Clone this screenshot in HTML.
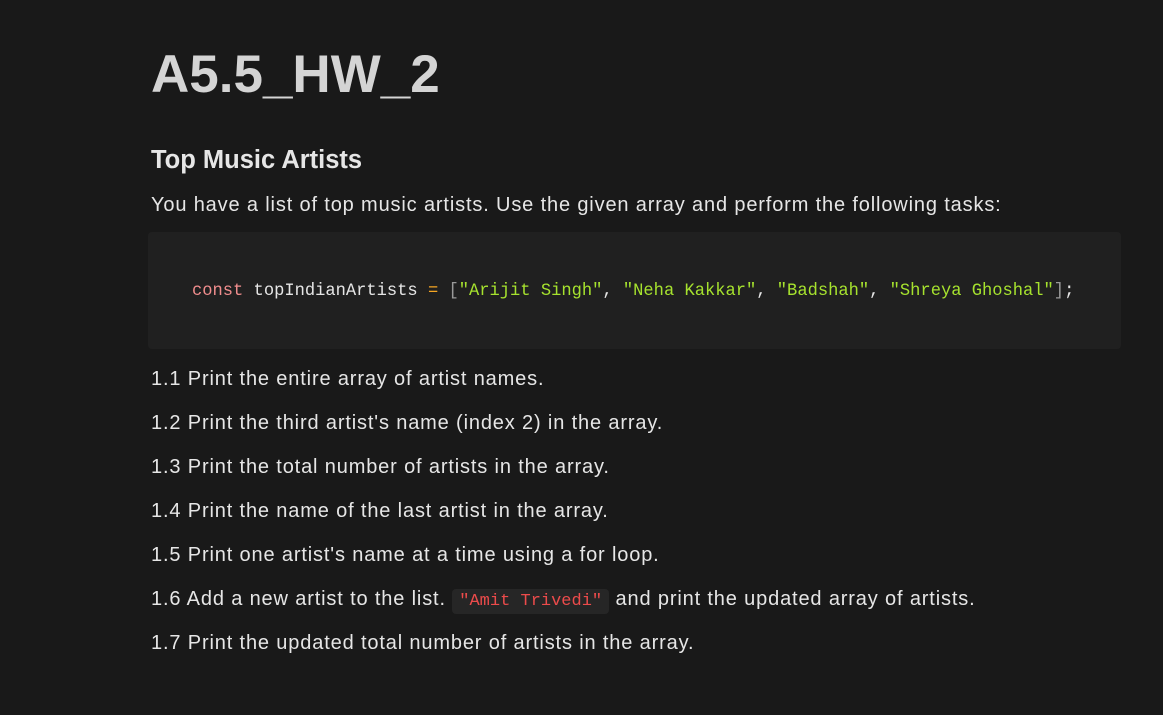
<!DOCTYPE html>
<html><head><meta charset="utf-8"><style>
html,body{margin:0;background:#191919;}
body{width:1163px;height:715px;overflow:hidden;font-family:"Liberation Sans",sans-serif;color:#e6e6e6;position:relative;}
.a{position:absolute;left:151px;white-space:nowrap;}
h1{margin:0;font-size:53px;font-weight:bold;color:#d4d4d4;top:44px;}
h2{margin:0;font-size:25.5px;font-weight:bold;top:146px;}
.t{font-size:20px;letter-spacing:0.85px;}
.code{position:absolute;left:148px;top:232px;width:973px;height:117px;background:#202020;border-radius:4px;}
.code pre{margin:0;position:absolute;left:44px;top:50px;font-family:"Liberation Mono",monospace;font-size:17.1px;color:#e6e6e6;}
.k{color:#f08d8d}.o{color:#f5a623}.s{color:#a6e22e}.b{color:#999}
.ic{font-family:"Liberation Mono",monospace;font-size:17px;letter-spacing:0;color:#ec4b4b;background:#262626;border-radius:4px;padding:3px 7px;}
</style></head><body>
<h1 class="a">A5.5_HW_2</h1>
<h2 class="a">Top Music Artists</h2>
<div class="a t" style="top:194px">You have a list of top music artists. Use the given array and perform the following tasks:</div>
<div class="code"><pre><span class="k">const</span> topIndianArtists <span class="o">=</span> <span class="b">[</span><span class="s">"Arijit Singh"</span>, <span class="s">"Neha Kakkar"</span>, <span class="s">"Badshah"</span>, <span class="s">"Shreya Ghoshal"</span><span class="b">]</span>;</pre></div>
<div class="a t" style="top:368px">1.1 Print the entire array of artist names.</div>
<div class="a t" style="top:412px">1.2 Print the third artist's name (index 2) in the array.</div>
<div class="a t" style="top:456px">1.3 Print the total number of artists in the array.</div>
<div class="a t" style="top:500px">1.4 Print the name of the last artist in the array.</div>
<div class="a t" style="top:544px">1.5 Print one artist's name at a time using a for loop.</div>
<div class="a t" style="top:588px">1.6 Add a new artist to the list. <span class="ic">"Amit Trivedi"</span> and print the updated array of artists.</div>
<div class="a t" style="top:632px">1.7 Print the updated total number of artists in the array.</div>
</body></html>
